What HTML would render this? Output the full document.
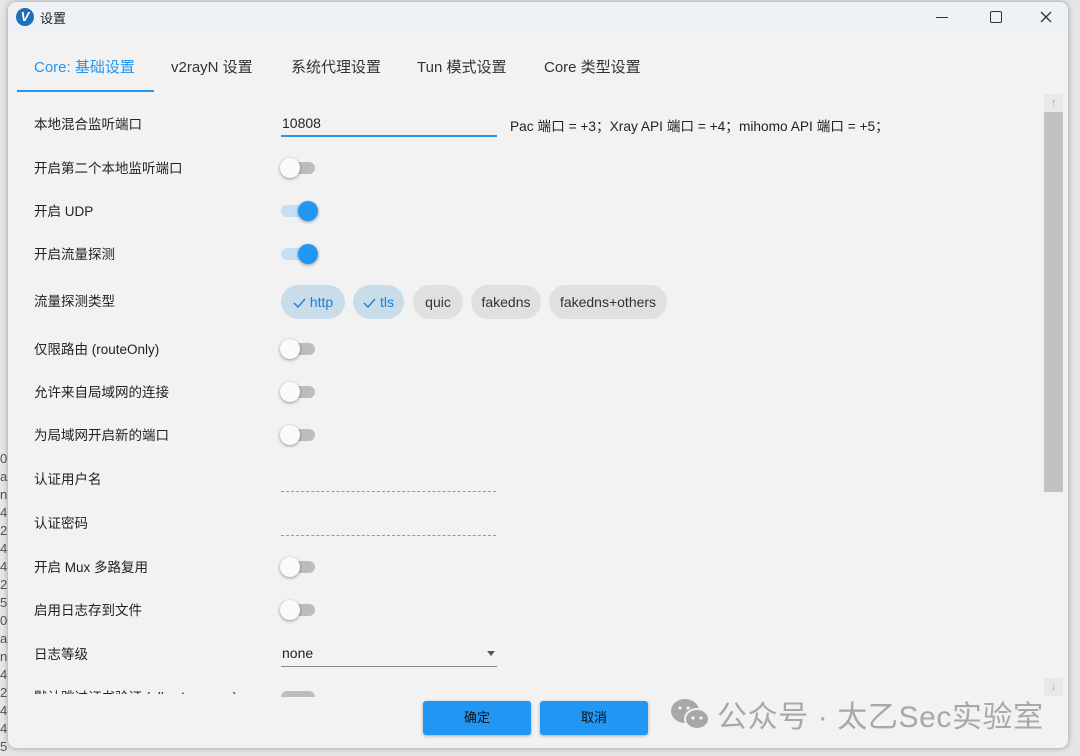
<!DOCTYPE html>
<html><head><meta charset="utf-8"><style>
body{margin:0;width:1080px;height:756px;background:#9a9a9a;position:relative;overflow:hidden;font-family:"Liberation Sans","Noto Sans CJK SC",sans-serif;}
.bgapp{position:absolute;left:0;top:0;width:1080px;height:756px;background:#e6e6e6;}
.win{position:absolute;left:8px;top:2px;width:1060px;height:746px;background:#f2f2f2;border-radius:8px;overflow:hidden;box-shadow:0 0 6px rgba(0,0,0,.35);}
.title{position:absolute;left:0;top:0;width:1060px;height:31px;background:#eef2f7;}
.a{position:absolute;white-space:nowrap;}
.lbl{position:absolute;left:26px;font-size:13.5px;color:#222;margin-top:-3px}
.tab{position:absolute;top:54px;font-size:15px;color:#333;}
.tog{position:absolute;left:273px;width:34px;height:12px;border-radius:6px;background:#bdbdbd;}
.tog i{position:absolute;top:-4px;width:20px;height:20px;border-radius:50%;background:#fafafa;box-shadow:0 1px 3px rgba(0,0,0,.4);left:-1px;}
.tog.on{background:#c6dff4}.tog.on i{background:#2196f3;left:17px}
.chip{position:absolute;top:283px;height:34px;border-radius:17px;background:#e0e0e0;font-size:14px;color:#333;line-height:34px;text-align:center;}
.chip.s{background:#c8dcea;color:#1e7fd0}
.chip svg{vertical-align:-1px;margin-right:4px}
.btn{position:absolute;top:699px;width:108px;height:34px;background:#2196f3;border-radius:3px;font-size:13px;color:#111;text-align:center;line-height:34px;box-shadow:0 1px 3px rgba(0,0,0,.3)}
.dash{position:absolute;left:273px;width:215px;border-top:1px dashed #999}
</style></head><body>
<div class="bgapp"></div>
<div class="a" style="left:0;top:450px;font-size:13px;color:#555;line-height:18px">0<br>a<br>n<br>4<br>2<br>4<br>4<br>2<br>5<br>0<br>a<br>n<br>4<br>2<br>4<br>4<br>5</div>
<div class="win">
 <div class="title">
  <div class="a" style="left:8px;top:6px;width:18px;height:18px;border-radius:50%;background:#1e6fb8;color:#fff;font-size:13px;font-weight:bold;text-align:center;line-height:18px;font-style:italic">V</div>
  <div class="a" style="left:32px;top:6px;font-size:13px;color:#222">设置</div>
  <div class="a" style="left:928px;top:15px;width:12px;border-top:1px solid #333"></div>
  <div class="a" style="left:982px;top:9px;width:10px;height:10px;border:1.5px solid #333;border-radius:2px"></div>
  <svg class="a" style="left:1032px;top:9px" width="12" height="12"><path d="M1 1L11 11M11 1L1 11" stroke="#333" stroke-width="1.3"/></svg>
 </div>
 <div class="tab" style="left:26px;color:#2196f3">Core: 基础设置</div>
 <div class="tab" style="left:163px">v2rayN 设置</div>
 <div class="tab" style="left:283px">系统代理设置</div>
 <div class="tab" style="left:409px">Tun 模式设置</div>
 <div class="tab" style="left:536px">Core 类型设置</div>
 <div class="a" style="left:9px;top:88px;width:137px;height:2px;background:#2196f3"></div>

 <div class="lbl" style="top:114px">本地混合监听端口</div>
 <div class="a" style="left:274px;top:113px;font-size:14px;color:#222">10808</div>
 <div class="a" style="left:273px;top:133px;width:216px;height:2px;background:#2196f3"></div>
 <div class="a" style="left:502px;top:113px;font-size:13.7px;color:#222">Pac 端口 = +3；Xray API 端口 = +4；mihomo API 端口 = +5；</div>

 <div class="lbl" style="top:158px">开启第二个本地监听端口</div><div class="tog" style="top:160px"><i></i></div>
 <div class="lbl" style="top:201px">开启 UDP</div><div class="tog on" style="top:203px"><i></i></div>
 <div class="lbl" style="top:244px">开启流量探测</div><div class="tog on" style="top:246px"><i></i></div>
 <div class="lbl" style="top:291px">流量探测类型</div>
 <div class="chip s" style="left:273px;width:64px"><svg width="13" height="10"><path d="M1 5L5 9L12 1" stroke="#1e7fd0" stroke-width="1.4" fill="none"/></svg>http</div>
 <div class="chip s" style="left:345px;width:51px"><svg width="13" height="10"><path d="M1 5L5 9L12 1" stroke="#1e7fd0" stroke-width="1.4" fill="none"/></svg>tls</div>
 <div class="chip" style="left:405px;width:50px">quic</div>
 <div class="chip" style="left:463px;width:70px">fakedns</div>
 <div class="chip" style="left:541px;width:118px">fakedns+others</div>
 <div class="lbl" style="top:339px">仅限路由 (routeOnly)</div><div class="tog" style="top:341px"><i></i></div>
 <div class="lbl" style="top:382px">允许来自局域网的连接</div><div class="tog" style="top:384px"><i></i></div>
 <div class="lbl" style="top:425px">为局域网开启新的端口</div><div class="tog" style="top:427px"><i></i></div>
 <div class="lbl" style="top:469px">认证用户名</div><div class="dash" style="top:489px"></div>
 <div class="lbl" style="top:513px">认证密码</div><div class="dash" style="top:533px"></div>
 <div class="lbl" style="top:557px">开启 Mux 多路复用</div><div class="tog" style="top:559px"><i></i></div>
 <div class="lbl" style="top:600px">启用日志存到文件</div><div class="tog" style="top:602px"><i></i></div>
 <div class="lbl" style="top:644px">日志等级</div>
 <div class="a" style="left:274px;top:643px;font-size:14px;color:#222">none</div>
 <div class="a" style="left:479px;top:649px;border:4px solid transparent;border-top:5px solid #555"></div>
 <div class="a" style="left:273px;top:664px;width:216px;border-top:1px solid #888"></div>
 <div class="lbl" style="top:687px;height:8px;overflow:hidden">默认跳过证书验证 (allowInsecure)</div><div class="tog" style="top:689px;height:6px;border-radius:6px 6px 0 0"></div>

 <div class="a" style="left:1036px;top:92px;width:19px;height:18px;background:#e8e8e8;color:#aaa;font-size:11px;text-align:center;line-height:18px">↑</div>
 <div class="a" style="left:1036px;top:110px;width:19px;height:380px;background:#c2c2c2"></div>
 <div class="a" style="left:1036px;top:676px;width:19px;height:18px;background:#e8e8e8;color:#aaa;font-size:11px;text-align:center;line-height:18px">↓</div>

 <div class="btn" style="left:415px">确定</div>
 <div class="btn" style="left:532px">取消</div>
 <svg class="a" style="left:660px;top:693px" width="46" height="40"><ellipse cx="17" cy="16" rx="14" ry="12" fill="#a8a8a8"/><ellipse cx="29" cy="24" rx="12" ry="10" fill="#a8a8a8" stroke="#f2f2f2" stroke-width="2"/><circle cx="25" cy="23" r="1.6" fill="#f2f2f2"/><circle cx="33" cy="23" r="1.6" fill="#f2f2f2"/><circle cx="12" cy="13" r="1.6" fill="#f2f2f2"/><circle cx="20" cy="13" r="1.6" fill="#f2f2f2"/></svg>
 <div class="a" style="left:709px;top:690px;font-size:30px;color:#a8a8a8;letter-spacing:0.6px">公众号 · 太乙Sec实验室</div>
</div>
</body></html>
